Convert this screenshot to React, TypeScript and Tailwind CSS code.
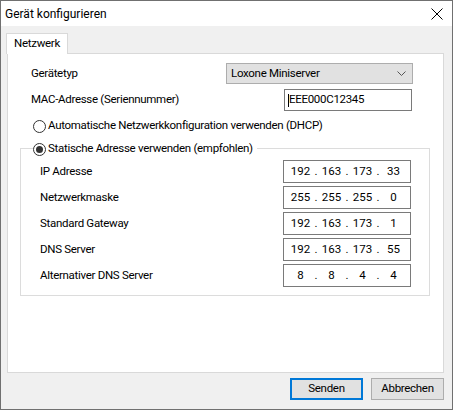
import React from "react";

const font = { fontFamily: 'Roboto, "Liberation Sans", sans-serif' };

const ipRows = [
  { label: "IP Adresse", parts: ["192", "163", "173", "33"] },
  { label: "Netzwerkmaske", parts: ["255", "255", "255", "0"] },
  { label: "Standard Gateway", parts: ["192", "163", "173", "1"] },
  { label: "DNS Server", parts: ["192", "163", "173", "55"] },
  { label: "Alternativer DNS Server", parts: ["8", "8", "4", "4"] },
];

function Radio({ checked }: { checked?: boolean }) {
  return (
    <span className="flex h-[13px] w-[13px] shrink-0 items-center justify-center rounded-full border border-[#333333] bg-white">
      {checked && <span className="h-[7px] w-[7px] rounded-full bg-[#333333]" />}
    </span>
  );
}

function IpField({ parts }: { parts: string[] }) {
  return (
    <div className="flex h-[23px] w-[128px] items-center border border-[#7a7a7a] bg-white pl-[4px] tracking-normal">
      {parts.map((p, i) => (
        <React.Fragment key={i}>
          <span className="w-[25px] text-center">{p}</span>
          {i < 3 && <span className="w-[6px] text-center">.</span>}
        </React.Fragment>
      ))}
    </div>
  );
}

export default function App() {
  return (
    <div
      className="flex h-[410px] w-[453px] flex-col border border-[#707070] bg-[#f0f0f0] text-[11.5px] leading-none tracking-[-0.3px] text-black"
      style={font}
    >
      {/* title bar */}
      <div className="flex h-[25px] shrink-0 items-center justify-between bg-white pl-[4px] pr-[8px]">
        <span className="text-[12px] tracking-normal">Gerät konfigurieren</span>
        <svg width="12" height="12" viewBox="0 0 12 12" className="mr-[1px]">
          <path d="M0.5 0.5 L11.5 11.5 M11.5 0.5 L0.5 11.5" stroke="#000" strokeWidth="1" />
        </svg>
      </div>

      <div className="flex flex-1 flex-col pt-[7px]">
        {/* tabs */}
        <div className="relative z-10 ml-[5px] -mb-px flex">
          <div className="flex h-[21px] w-[62px] items-center justify-center border border-b-0 border-[#d9d9d9] bg-white">
            Netzwerk
          </div>
        </div>

        {/* tab page */}
        <div className="ml-[6px] h-[320px] w-[437px] border border-[#d9d9d9] bg-white pt-[9px]">
          <div className="flex h-[21px] items-center">
            <span className="w-[218px] pl-[23px]">Gerätetyp</span>
            <div className="flex h-[21px] w-[187px] items-center justify-between border border-[#adadad] bg-[#e1e1e1] pl-[4px] pr-[6px]">
              <span>Loxone Miniserver</span>
              <svg width="9" height="5" viewBox="0 0 9 5">
                <path d="M0.5 0.5 L4.5 4.5 L8.5 0.5" stroke="#555" strokeWidth="1" fill="none" />
              </svg>
            </div>
          </div>

          <div className="mt-[5px] flex h-[22px] items-center">
            <span className="w-[276px] pl-[23px]">MAC-Adresse (Seriennummer)</span>
            <div className="flex h-[22px] w-[128px] items-center border border-[#7a7a7a] bg-white pl-[3px]">
              <span className="h-[13px] w-px bg-black" />
              <span>EEE000C12345</span>
            </div>
          </div>

          <div className="mt-[7px] flex h-[16px] items-center gap-[2px] pl-[25px]">
            <Radio />
            <span>Automatische Netzwerkkonfiguration verwenden (DHCP)</span>
          </div>

          <div className="relative ml-[12px] mt-[14px] w-[410px] border border-[#dcdcdc] pb-[8px] pt-[11px]">
            <div className="absolute -top-[8px] left-[12px] flex h-[16px] items-center gap-[2px] bg-white pr-[4px]">
              <Radio checked />
              <span>Statische Adresse verwenden (empfohlen)</span>
            </div>
            <div className="flex flex-col gap-[3px]">
              {ipRows.map((r) => (
                <div key={r.label} className="flex items-center">
                  <span className="w-[262px] pl-[19px]">{r.label}</span>
                  <IpField parts={r.parts} />
                </div>
              ))}
            </div>
          </div>
        </div>

        {/* buttons */}
        <div className="mt-[5px] flex w-[443px] justify-end gap-[8px]">
          <button className="flex h-[22px] w-[73px] items-center justify-center border-2 border-[#0078d7] bg-[#e1e1e1]">
            Senden
          </button>
          <button className="flex h-[22px] w-[73px] items-center justify-center border border-[#adadad] bg-[#e1e1e1]">
            Abbrechen
          </button>
        </div>
      </div>
    </div>
  );
}
